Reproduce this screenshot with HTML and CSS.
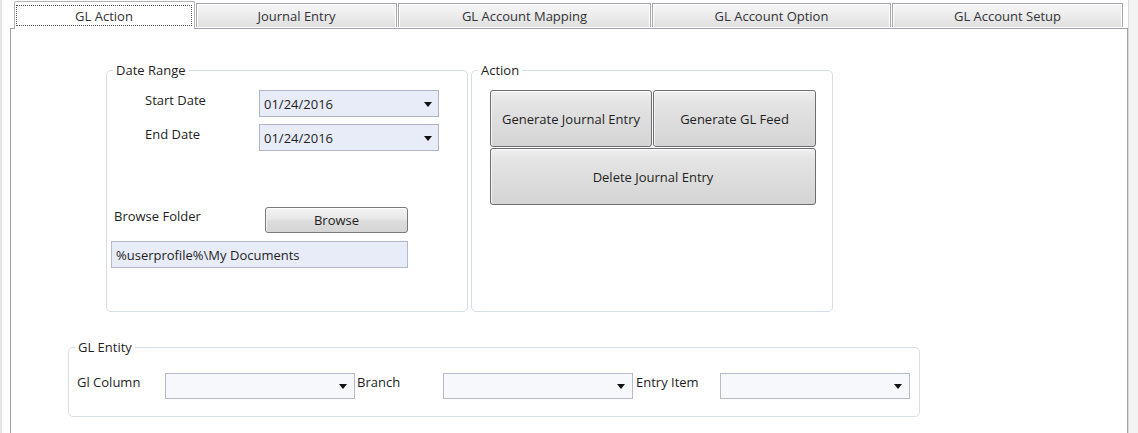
FILE: index.html
```html
<!DOCTYPE html>
<html lang="en">
<head>
<meta charset="utf-8">
<title>GL Action</title>
<link rel="stylesheet" href="styles.css">
</head>
<body>
<div class="app">
  <div class="main">
    <div class="tabs">
      <div class="tab tab-active tab-w1"><span class="focus">GL Action</span></div>
      <div class="tab tab-w2">Journal Entry</div>
      <div class="tab tab-w3">GL Account Mapping</div>
      <div class="tab tab-w4">GL Account Option</div>
      <div class="tab tab-w5">GL Account Setup</div>
    </div>
    <div class="panel">
      <div class="top-row">
        <fieldset class="group group-date">
          <legend>Date Range</legend>
          <div class="date-body">
            <div class="row date-row">
              <span class="label label-date">Start Date</span>
              <div class="combo combo-date"><span class="combo-text">01/24/2016</span><i class="arrow"></i></div>
            </div>
            <div class="row date-row">
              <span class="label label-date">End Date</span>
              <div class="combo combo-date"><span class="combo-text">01/24/2016</span><i class="arrow"></i></div>
            </div>
            <div class="row browse-row">
              <span class="label label-browse">Browse Folder</span>
              <div class="btn btn-browse">Browse</div>
            </div>
            <div class="textbox">%userprofile%\My Documents</div>
          </div>
        </fieldset>
        <fieldset class="group group-action">
          <legend>Action</legend>
          <div class="action-grid">
            <div class="btn btn-action">Generate Journal Entry</div>
            <div class="btn btn-action">Generate GL Feed</div>
            <div class="btn btn-action btn-wide">Delete Journal Entry</div>
          </div>
        </fieldset>
      </div>
      <fieldset class="group group-entity">
        <legend>GL Entity</legend>
        <div class="entity-row">
          <span class="label label-e1">Gl Column</span>
          <div class="combo combo-entity"><i class="arrow"></i></div>
          <span class="label label-e2">Branch</span>
          <div class="combo combo-entity"><i class="arrow"></i></div>
          <span class="label label-e3">Entry Item</span>
          <div class="combo combo-entity"><i class="arrow"></i></div>
        </div>
      </fieldset>
    </div>
  </div>
  <div class="strip"></div>
</div>
</body>
</html>
```
FILE: styles.css
```css
* { box-sizing: border-box; }
html, body {
  margin: 0;
  padding: 0;
  background: #ffffff;
}
body {
  width: 1138px;
  height: 433px;
  overflow: hidden;
  font-family: "Open Sans", "Noto Sans", "Liberation Sans", sans-serif;
  font-size: 13px;
  color: #1e1e24;
}
.app {
  display: flex;
  height: 433px;
  border-left: 2px solid #e4e4e6;
  padding-left: 8px;
}
.main {
  width: 1118px;
  display: flex;
  flex-direction: column;
}
.strip {
  flex: 1;
  background: #f3f3f4;
  border-left: 1px solid #d8d8dc;
}

/* Tabs */
.tabs {
  display: flex;
  align-items: flex-end;
  gap: 1px;
  height: 28px;
  padding-left: 4px;
  position: relative;
  z-index: 2;
}
.tab {
  height: 24px;
  margin-bottom: 1px;
  display: flex;
  align-items: center;
  justify-content: center;
  border: 1px solid #a6a6ac;
  border-bottom: none;
  box-shadow: inset 1px 1px 0 #ffffff, inset -1px 0 0 #ffffff;
  background: linear-gradient(#f6f6f6, #ececec 50%, #dfdfdf);
  color: #333338;
  line-height: 18px;
  white-space: nowrap;
}
.tab-active {
  height: 28px;
  margin-bottom: -1px;
  background: #ffffff;
  box-shadow: none;
  border-color: #b4b4ba;
  border-radius: 2px 2px 0 0;
  padding: 3px 2px 3px 1px;
  align-items: stretch;
}
.focus {
  flex: 1;
  display: flex;
  align-items: center;
  justify-content: center;
  border: 1px dotted #505050;
}
.tab-w1 { width: 181px; }
.tab-w2 { width: 201px; }
.tab-w3 { width: 253px; }
.tab-w4 { width: 239px; }
.tab-w5 { width: 231px; }

/* Panel */
.panel {
  flex: 1;
  border: 1px solid #a2a2ae;
  border-bottom: none;
  padding: 33px 0 0 0;
  background: #ffffff;
}
.top-row {
  display: flex;
  align-items: stretch;
  gap: 3px;
  margin-left: 95px;
}

/* Group boxes */
.group {
  margin: 0;
  padding: 0;
  border: 1px solid #d6dde7;
  border-radius: 5px;
  min-width: 0;
}
.group legend {
  margin-left: 6px;
  padding: 0 3px;
  line-height: 16px;
  color: #1e1e24;
}
.group-date { width: 362px; }
.group-action { width: 362px; }

.date-body {
  padding: 12px 0 43px 4px;
  display: flex;
  flex-direction: column;
}
.row {
  display: flex;
  align-items: flex-start;
}
.date-row { margin-left: 34px; }
.date-row + .date-row { margin-top: 7px; }
.label {
  line-height: 18px;
  white-space: nowrap;
}
.label-date { width: 114px; padding-top: 1px; }
.browse-row { margin-top: 56px; margin-left: 3px; }
.label-browse { width: 151px; }

.combo {
  position: relative;
  display: flex;
  align-items: center;
  border: 1px solid #b2b4c4;
}
.combo-date {
  width: 180px;
  height: 27px;
  background: #e7ecf8;
  padding-left: 4px;
}
.combo-text { line-height: 18px; }
.arrow {
  position: absolute;
  right: 6px;
  top: 50%;
  margin-top: -2px;
  width: 0;
  height: 0;
  border-left: 4px solid transparent;
  border-right: 4px solid transparent;
  border-top: 5px solid #111111;
}

.textbox {
  margin-top: 8px;
  width: 297px;
  height: 27px;
  border: 1px solid #b6b9ca;
  background: #e7ecf8;
  padding-left: 4px;
  display: flex;
  align-items: center;
  line-height: 18px;
}

/* Buttons */
.btn {
  display: flex;
  align-items: center;
  justify-content: center;
  border: 1px solid #7a7a7e;
  border-radius: 3px;
  background: linear-gradient(#f3f3f3, #e8e8e8 45%, #dcdcdc 55%, #d6d6d6);
  box-shadow: inset 0 1px 0 #ffffff, inset 1px 0 0 #f4f4f4;
  color: #1e1e24;
  line-height: 18px;
  white-space: nowrap;
}
.btn-browse {
  width: 143px;
  height: 26px;
}
.action-grid {
  display: grid;
  grid-template-columns: 162px 163px;
  grid-template-rows: 57px 57px;
  gap: 1px;
  padding: 12px 0 0 18px;
}
.btn-action {
  border-color: #6e6e72;
  background: linear-gradient(#f0f0f0, #e4e4e4 20%, #dcdcdc 60%, #d4d4d4);
}
.btn-wide { grid-column: 1 / 3; }

/* GL Entity */
.group-entity {
  width: 852px;
  margin-top: 27px;
  margin-left: 57px;
}
.entity-row {
  display: flex;
  align-items: flex-start;
  padding: 18px 0 17px 8px;
}
.label-e1 { width: 88px; }
.label-e2 { width: 86px; margin-left: 2px; }
.label-e3 { width: 84px; margin-left: 3px; }
.combo-entity {
  width: 190px;
  height: 26px;
  background: #f6f8fc;
  border-color: #b8bac9;
}
.combo-entity .arrow { right: 7px; }
```
